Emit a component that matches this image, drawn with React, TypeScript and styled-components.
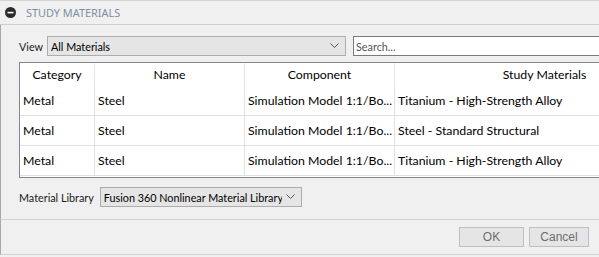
import React from "react";
import styled, { createGlobalStyle } from "styled-components";

const Global = createGlobalStyle`
  html, body { margin: 0; padding: 0; background: #f0f0f0; }
  body { font-family: Lato, "Noto Sans", sans-serif; font-size: 10.8px; color: #000; }
`;

const Dialog = styled.div`
  width: 599px;
  height: 257px;
  box-sizing: border-box;
  border-top: 1px solid #d4d4d4;
  background: #f0f0f0;
  display: flex;
  flex-direction: column;
  overflow: hidden;
`;

const Header = styled.div`
  height: 23px;
  border-bottom: 1px solid #cfcfcf;
  display: flex;
  align-items: center;
  padding-left: 5px;
  gap: 10px;
`;

const HeaderTitle = styled.span`
  font-family: "Noto Sans", sans-serif;
  font-size: 10.9px;
  color: #7f8fa4;
`;

const Body = styled.div`
  border-left: 1px solid #a8a8a8;
  padding: 11px 0 0 18px;
  display: flex;
  flex-direction: column;
  height: 195px;
  box-sizing: border-box;
  border-bottom: 1px solid #d2d2d2;
`;

const Row = styled.div<{ $gap?: number; $mt?: number }>`
  display: flex;
  align-items: center;
  gap: ${(p) => p.$gap ?? 4}px;
  margin-top: ${(p) => p.$mt ?? 0}px;
`;

const Label = styled.span`
  color: #1a1a1a;
  white-space: nowrap;
`;

const Select = styled.div<{ $w: number }>`
  width: ${(p) => p.$w}px;
  flex-shrink: 0;
  height: 20px;
  box-sizing: border-box;
  border: 1px solid #adadad;
  background: #e5e5e5;
  display: flex;
  align-items: center;
  justify-content: space-between;
  gap: 4px;
  padding: 0 6px 0 3px;
  white-space: nowrap;
  overflow: hidden;
`;

const SelectText = styled.span`
  overflow: hidden;
  white-space: nowrap;
`;

const SearchBox = styled.div`
  flex: 1;
  height: 20px;
  box-sizing: border-box;
  border: 1px solid #7a7a7a;
  border-right: none;
  background: #fff;
  display: flex;
  align-items: center;
  padding-left: 2px;
  color: #555;
  margin-left: 3px;
`;

const TableWrap = styled.div`
  margin-top: 6px;
  height: 116px;
  box-sizing: border-box;
  border: 1px solid #828790;
  border-right: none;
  background: #fff;
  overflow: hidden;
  font-size: 12.3px;
`;

const Table = styled.table`
  border-collapse: separate;
  border-spacing: 0;
  table-layout: fixed;
  width: 675px;
`;

const Col = styled.col<{ $w: number }>`
  width: ${(p) => p.$w}px;
`;

const Th = styled.th`
  box-sizing: border-box;
  height: 23px;
  font-weight: normal;
  text-align: center;
  padding: 0;
  border-right: 1px solid #e5e5e5;
  white-space: nowrap;
  overflow: hidden;
`;

const Td = styled.td`
  box-sizing: border-box;
  height: 30px;
  padding: 0 1px 0 3px;
  border-right: 1px solid #e0e0e0;
  border-bottom: 1px solid #e0e0e0;
  white-space: nowrap;
  overflow: hidden;
`;

const Footer = styled.div`
  height: 34px;
  border-left: 1px solid #a8a8a8;
  border-bottom: 1px solid #d2d2d2;
  display: flex;
  align-items: center;
  justify-content: flex-end;
  gap: 5px;
  padding-right: 10px;
`;

const Button = styled.div<{ $w: number }>`
  width: ${(p) => p.$w}px;
  height: 20px;
  box-sizing: border-box;
  border: 1px solid #bfbfbf;
  background: #e5e5e5;
  color: #6d6d6d;
  font-family: "Liberation Sans", Arial, sans-serif;
  font-size: 12px;
  display: flex;
  align-items: center;
  justify-content: center;
`;

const Chevron = () => (
  <svg width="9" height="6" viewBox="0 0 9 6" style={{ flexShrink: 0 }}>
    <path d="M0.5 0.5 L4.5 4.5 L8.5 0.5" fill="none" stroke="#555" strokeWidth="1" />
  </svg>
);

const CollapseIcon = () => (
  <svg width="11" height="11" viewBox="0 0 11 11">
    <circle cx="5.5" cy="5.5" r="5.5" fill="#2b2b2b" />
    <rect x="2.5" y="4.8" width="6" height="1.6" fill="#fff" />
  </svg>
);

const rows = [
  ["Metal", "Steel", "Simulation Model 1:1/Bo...", "Titanium - High-Strength Alloy"],
  ["Metal", "Steel", "Simulation Model 1:1/Bo...", "Steel - Standard Structural"],
  ["Metal", "Steel", "Simulation Model 1:1/Bo...", "Titanium - High-Strength Alloy"],
];

export default function App() {
  return (
    <>
      <Global />
      <Dialog>
        <Header>
          <CollapseIcon />
          <HeaderTitle>STUDY MATERIALS</HeaderTitle>
        </Header>
        <Body>
          <Row>
            <Label>View</Label>
            <Select $w={299}>
              <SelectText>All Materials</SelectText>
              <Chevron />
            </Select>
            <SearchBox>Search...</SearchBox>
          </Row>
          <TableWrap>
            <Table>
              <colgroup>
                <Col $w={75} />
                <Col $w={150} />
                <Col $w={150} />
                <Col $w={300} />
              </colgroup>
              <thead>
                <tr>
                  <Th>Category</Th>
                  <Th>Name</Th>
                  <Th>Component</Th>
                  <Th>Study Materials</Th>
                </tr>
              </thead>
              <tbody>
                {rows.map((r, i) => (
                  <tr key={i}>
                    {r.map((c, j) => (
                      <Td key={j}>{c}</Td>
                    ))}
                  </tr>
                ))}
              </tbody>
            </Table>
          </TableWrap>
          <Row $gap={6} $mt={9}>
            <Label>Material Library</Label>
            <Select $w={202}>
              <SelectText>Fusion 360 Nonlinear Material Library</SelectText>
              <Chevron />
            </Select>
          </Row>
        </Body>
        <Footer>
          <Button $w={65}>OK</Button>
          <Button $w={60}>Cancel</Button>
        </Footer>
      </Dialog>
    </>
  );
}
